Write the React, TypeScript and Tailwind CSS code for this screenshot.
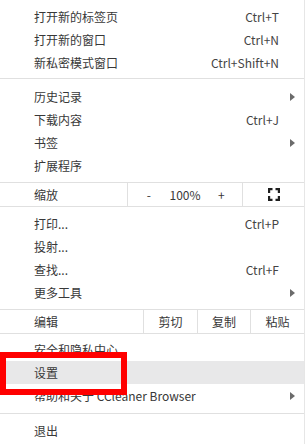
import React from "react";

type Item = { label: string; shortcut?: string; sub?: boolean; active?: boolean };

const FONT = { fontFamily: '"Microsoft YaHei", "Noto Sans CJK SC", "Noto Sans", sans-serif' };

function Arrow() {
  return (
    <svg width="5" height="8" viewBox="0 0 5 8" className="shrink-0">
      <path d="M0 0 L5 4 L0 8 Z" fill="#6b6b6b" />
    </svg>
  );
}

function Row({ item }: { item: Item }) {
  return (
    <div
      className={`flex h-[23px] items-center pl-[34px] pr-[9px] text-[12px] text-[#383838] ${
        item.active ? "bg-[#e8e8e9]" : ""
      }`}
    >
      <span className="flex-1 whitespace-nowrap">{item.label}</span>
      {item.shortcut && <span className="mr-[16px] whitespace-nowrap text-[#444]">{item.shortcut}</span>}
      {item.sub && <Arrow />}
    </div>
  );
}

function Sep({ className = "" }: { className?: string }) {
  return <div className={`h-px bg-[#e0e0e0] ${className}`} />;
}

function FullscreenIcon() {
  return (
    <svg width="12" height="13" viewBox="0 0 12 13" fill="none" stroke="#1f1f1f" strokeWidth="2.2">
      <path d="M1.1 5 V1.1 H4.5" />
      <path d="M7.5 1.1 H10.9 V5" />
      <path d="M10.9 8 V11.9 H7.5" />
      <path d="M4.5 11.9 H1.1 V8" />
    </svg>
  );
}

export default function App() {
  return (
    <div className="relative h-[444px] w-[305px] overflow-hidden border-r border-[#e6e6e6] bg-white" style={FONT}>
      <div className="pt-[5px]">
        <Row item={{ label: "打开新的标签页", shortcut: "Ctrl+T" }} />
        <Row item={{ label: "打开新的窗口", shortcut: "Ctrl+N" }} />
        <Row item={{ label: "新私密模式窗口", shortcut: "Ctrl+Shift+N" }} />
      </div>
      <Sep className="mt-[4px]" />
      <div className="pt-[6px]">
        <Row item={{ label: "历史记录", sub: true }} />
        <Row item={{ label: "下载内容", shortcut: "Ctrl+J" }} />
        <Row item={{ label: "书签", sub: true }} />
        <Row item={{ label: "扩展程序" }} />
      </div>
      <Sep className="mt-[5px]" />
      {/* zoom row */}
      <div className="flex h-[23px] items-center text-[12px] text-[#383838]">
        <span className="w-[127px] pl-[34px]">缩放</span>
        <div className="flex h-full w-[115px] items-center border-l border-[#e0e0e0]">
          <span className="w-[42px] text-center">-</span>
          <span className="w-[31px] text-center">100%</span>
          <span className="w-[42px] text-center">+</span>
        </div>
        <div className="flex h-full flex-1 items-center justify-center border-l border-[#e0e0e0] pl-[1px]">
          <FullscreenIcon />
        </div>
      </div>
      <Sep />
      <div className="pt-[5px]">
        <Row item={{ label: "打印...", shortcut: "Ctrl+P" }} />
        <Row item={{ label: "投射..." }} />
        <Row item={{ label: "查找...", shortcut: "Ctrl+F" }} />
        <Row item={{ label: "更多工具", sub: true }} />
      </div>
      <Sep className="mt-[5px]" />
      {/* edit row */}
      <div className="flex h-[23px] items-center text-[12px] text-[#383838]">
        <span className="w-[143px] pl-[34px]">编辑</span>
        <span className="flex h-full w-[54px] items-center justify-center border-l border-[#e0e0e0]">剪切</span>
        <span className="flex h-full w-[53px] items-center justify-center border-l border-[#e0e0e0]">复制</span>
        <span className="flex h-full flex-1 items-center justify-center border-l border-[#e0e0e0]">粘贴</span>
      </div>
      <Sep />
      <div className="pt-[4px]">
        <Row item={{ label: "安全和隐私中心" }} />
        <Row item={{ label: "设置", active: true }} />
        <Row item={{ label: "帮助和关于 CCleaner Browser", sub: true }} />
      </div>
      <Sep className="mt-[6px]" />
      <div className="pt-[5px]">
        <Row item={{ label: "退出" }} />
      </div>

      {/* red highlight box */}
      <div className="absolute left-0 top-[352px] h-[43px] w-[127px] border-[6px] border-[#ff0000]" />
    </div>
  );
}
